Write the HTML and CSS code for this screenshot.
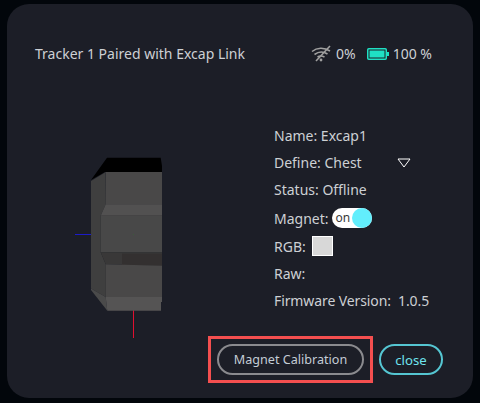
FILE: index.html
```html
<!DOCTYPE html>
<html lang="en">
<head>
<meta charset="utf-8">
<title>Tracker</title>
<link rel="stylesheet" href="styles.css">
</head>
<body>
<section class="card">
  <header class="head">
    <span class="title">Tracker 1 Paired with Excap Link</span>
    <div class="stats">
      <svg class="wifi" width="20" height="17" viewBox="0 0 20 17" fill="none" stroke="#a0a0a0" stroke-width="1.6">
        <path d="M1 6.5C6 2.5 13 2.2 19 6"/>
        <path d="M3.5 9.5C7.5 6.5 12.5 6.5 16.5 9"/>
        <path d="M6.5 12C8.5 10.8 11 10.8 13.5 12"/>
        <path d="M5 16L19 1"/>
        <circle cx="10" cy="15" r="1.4" fill="#a0a0a0" stroke="none"/>
      </svg>
      <span class="signal">0%</span>
      <svg class="battery" width="22" height="12" viewBox="0 0 22 12">
        <rect x="0.75" y="0.75" width="18.5" height="10.5" rx="1" fill="#1c1e27" stroke="#1fe0c4" stroke-width="1.5"/>
        <rect x="2.5" y="2.5" width="15" height="7" fill="#1fe0c4"/>
        <rect x="20" y="4" width="2" height="4" fill="#1fe0c4"/>
      </svg>
      <span>100 %</span>
    </div>
  </header>
  <div class="main">
    <svg class="model" width="110" height="190" viewBox="70 150 110 190">
      <rect x="75" y="234" width="16" height="1" fill="#1c1cc8"/>
      <rect x="133" y="310" width="1" height="28" fill="#e01030"/>
      <polygon points="91,180 107,157.7 160.7,157.7 162,166 162,172 105,172" fill="#000"/>
      <polygon points="105.5,172 162,172 162,204.5 105.5,204.5" fill="#494848"/>
      <polygon points="91,181 105,172.5 105.7,204.3 100.7,215.7 100.7,252.3 105.7,264.3 105.7,297 91,288.5" fill="#3f3f3f"/>
      <polygon points="105.7,204.3 162,204.3 162,215.7 100.7,215.7" fill="#525151"/>
      <polygon points="100.7,215.7 162,215.7 162,252.3 100.7,252.3" fill="#484848"/>
      <polygon points="100.7,252.3 162,252.3 162,265.7 105.7,264.3" fill="#393838"/>
      <polygon points="122,253.5 162,253.5 162,265.7 122,265.7" fill="#333030"/>
      <polygon points="105.7,264.3 162,265.7 162,297 105.7,297" fill="#494848"/>
      <polygon points="91,288.5 105.7,297 107.3,310.7 91,290" fill="#4a4a4a"/>
      <polygon points="105.7,297 162,297 162,302 161,302 161,310.7 107.3,310.7" fill="#555454"/>
      <rect x="133" y="234" width="1" height="1" fill="#3c5a3c"/>
    </svg>
    <ul class="info">
      <li class="row">Name: Excap1</li>
      <li class="row"><span>Define: Chest</span><svg class="caret" width="14" height="10" viewBox="0 0 14 10"><polygon points="1,1 13,1 7,9" fill="none" stroke="#fff" stroke-width="1"/></svg></li>
      <li class="row">Status: Offline</li>
      <li class="row row-tall"><span>Magnet:</span><span class="toggle"><span class="toggle-label">on</span><span class="knob"></span></span></li>
      <li class="row"><span>RGB:</span><span class="swatch"></span></li>
      <li class="row">Raw:</li>
      <li class="row firmware">Firmware Version:&nbsp; 1.0.5</li>
    </ul>
  </div>
  <footer class="foot">
    <div class="highlight"></div>
    <button class="btn calibrate">Magnet Calibration</button>
    <button class="btn close">close</button>
  </footer>
</section>
</body>
</html>
```
FILE: styles.css
```css
* { box-sizing: border-box; }
html, body { margin: 0; height: 100%; }
body {
  background: #02060b;
  font-family: "Noto Sans", "Open Sans", sans-serif;
  font-size: 14px;
  color: #cdd0d4;
  padding: 4px 7px 5px;
  overflow: hidden;
}
.card {
  height: 394px;
  background: #1c1e27;
  border-radius: 22px;
  padding: 39px 30px 0 28px;
  display: flex;
  flex-direction: column;
}
.head {
  display: flex;
  justify-content: space-between;
  align-items: center;
  height: 21px;
  margin-right: 11px;
}
.stats { display: flex; align-items: center; }
.wifi { margin-right: 5px; }
.signal { margin-right: 11px; }
.battery { margin-right: 4px; }
.main {
  display: flex;
  margin-top: 20px;
  height: 256px;
}
.model { margin: 66px 0 0 35px; flex: none; }
.info {
  list-style: none;
  margin: 38px 0 0 94px;
  padding: 0;
  width: 170px;
  flex: none;
}
.row {
  height: 27.2px;
  display: flex;
  align-items: center;
  white-space: nowrap;
}
.row-tall { height: 29px; }
.firmware { letter-spacing: -0.1px; }
.caret { margin-left: 35px; }
.toggle {
  position: relative;
  width: 40px;
  height: 20px;
  background: #fff;
  border-radius: 10px;
  margin-left: 3px;
  display: block;
}
.toggle-label {
  position: absolute;
  left: 4px;
  top: 1px;
  font-size: 12px;
  line-height: 17px;
  color: #3a3a3a;
}
.knob {
  position: absolute;
  right: 0;
  top: 0;
  width: 20px;
  height: 20px;
  border-radius: 50%;
  background: #62eefc;
}
.swatch {
  width: 21px;
  height: 20px;
  background: #d8d8d8;
  border: 1px solid #fff;
  margin-left: 6px;
  display: block;
}
.foot {
  position: relative;
  display: flex;
  justify-content: flex-end;
  gap: 15px;
  margin-top: 4px;
}
.btn {
  height: 31px;
  border-radius: 16px;
  background: transparent;
  font: inherit;
  font-size: 12.6px;
  padding: 0;
}
.calibrate { width: 147px; border: 2px solid #8a8a8e; color: #c4cdd6; }
.close { width: 64px; border: 2px solid #55c6d2; color: #6fe3ee; font-size: 13.2px; }
.highlight {
  position: absolute;
  left: 173px;
  top: -8px;
  width: 165px;
  height: 47px;
  border: 3px solid #f44f4f;
  pointer-events: none;
}
```
